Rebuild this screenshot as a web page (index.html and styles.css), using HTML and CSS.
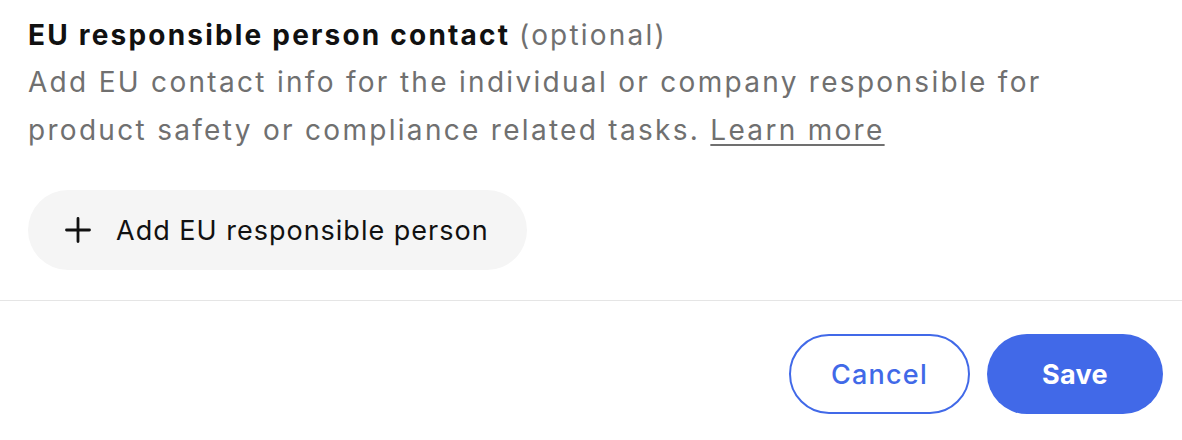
FILE: index.html
```html
<!DOCTYPE html>
<html lang="en">
<head>
    <meta charset="UTF-8">
    <title>EU responsible person</title>
    <link rel="stylesheet" href="styles.css">
</head>
<body>
    <div class="section">
        <h2 class="title">EU responsible person contact <span class="optional">(optional)</span></h2>
        <p class="desc">Add EU contact info for the individual or company responsible for product safety or compliance related tasks. <a href="#" class="learn">Learn more</a></p>
        <button class="add-btn">
            <svg class="plus" width="26" height="26" viewBox="0 0 26 26">
                <path d="M13 1.5v23M1.5 13h23" stroke="#111" stroke-width="2.8" stroke-linecap="round"/>
            </svg>
            Add EU responsible person
        </button>
    </div>
    <div class="footer">
        <button class="btn btn-secondary">Cancel</button>
        <button class="btn btn-primary">Save</button>
    </div>
</body>
</html>
```

FILE: styles.css
```css
body {
    margin: 0;
    font-family: Inter, 'Noto Sans', sans-serif;
    background-color: white;
    color: #111;
}
.section {
    padding: 15px 28px 30px 28px;
    border-bottom: 1px solid #e5e5e5;
}
.title {
    margin: 0;
    font-size: 28px;
    font-weight: 700;
    line-height: 40px;
    letter-spacing: 2.2px;
}
.optional {
    font-weight: 400;
    color: #707070;
    letter-spacing: 2.2px;
}
.desc {
    margin: 3px 0 36px 0;
    font-size: 28px;
    line-height: 48px;
    letter-spacing: 2.3px;
    color: #707070;
    max-width: 1060px;
}
.learn {
    color: #707070;
    text-decoration: underline;
    text-underline-offset: 4px;
    text-decoration-thickness: 2px;
}
.add-btn {
    display: flex;
    align-items: center;
    gap: 25px;
    height: 80px;
    padding: 0 38px 0 37px;
    border: none;
    border-radius: 40px;
    background-color: #f5f5f5;
    font-family: Inter, 'Noto Sans', sans-serif;
    font-size: 27px;
    letter-spacing: 1px;
    color: #111;
}
.footer {
    display: flex;
    justify-content: flex-end;
    gap: 17px;
    padding: 33px 19px 0 0;
}
.btn {
    height: 80px;
    border-radius: 40px;
    font-family: Inter, 'Noto Sans', sans-serif;
    font-size: 27px;
}
.btn-secondary {
    width: 181px;
    background-color: white;
    border: 2px solid #4169e8;
    color: #4169e8;
    font-weight: 500;
    letter-spacing: 1.2px;
}
.btn-primary {
    width: 176px;
    background-color: #4169e8;
    border: none;
    color: white;
    font-weight: 700;
    letter-spacing: 0.3px;
}
```
